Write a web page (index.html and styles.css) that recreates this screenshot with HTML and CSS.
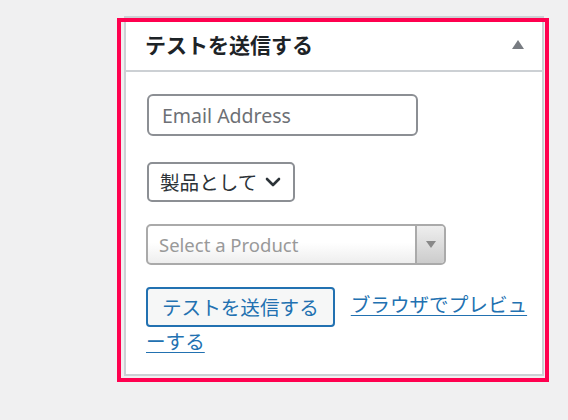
FILE: index.html
```html
<!DOCTYPE html>
<html lang="ja">
<head>
<meta charset="utf-8">
<link rel="stylesheet" href="styles.css">
</head>
<body>
<div class="page">
  <div class="postbox">
    <div class="postbox-header">
      <h2 class="postbox-title">テストを送信する</h2>
      <span class="toggle-arrow"></span>
    </div>
    <div class="postbox-body">
      <input class="email-input" type="text" placeholder="Email Address">
      <div class="as-select">
        <span class="as-select-label">製品として</span>
        <svg class="chevron" width="18" height="12" viewBox="0 0 18 12"><path d="M3 3 L9 9 L15 3" fill="none" stroke="#2c3338" stroke-width="2.6" stroke-linecap="round" stroke-linejoin="round"/></svg>
      </div>
      <div class="product-select">
        <span class="product-placeholder">Select a Product</span>
        <span class="product-arrow"><span class="product-arrow-tri"></span></span>
      </div>
      <div class="actions"><span class="send-button">テストを送信する</span><a class="preview-link" href="#">ブラウザでプレビューする</a></div>
    </div>
    <div class="highlight"></div>
  </div>
</div>
</body>
</html>
```
FILE: styles.css
```css
html, body {
  margin: 0;
  padding: 0;
  background: #f0f0f1;
}
body {
  width: 568px;
  height: 420px;
  overflow: hidden;
  font-family: "Noto Sans", "Noto Sans CJK JP", sans-serif;
  color: #1d2327;
}
.page {
  padding: 16px 0 0 124px;
}
.postbox {
  position: relative;
  box-sizing: border-box;
  width: 420px;
  height: 360px;
  background: #fff;
  border: 2px solid #ccd0d4;
}
.postbox-header {
  display: flex;
  align-items: center;
  justify-content: space-between;
  height: 52px;
  padding: 0 18px 0 19px;
  border-bottom: 2px solid #ccd0d4;
}
.postbox-title {
  margin: 0;
  font-family: "Noto Sans CJK JP", sans-serif;
  font-size: 21px;
  font-weight: 700;
  color: #1d2327;
  line-height: 1;
}
.toggle-arrow {
  width: 0;
  height: 0;
  border-left: 6px solid transparent;
  border-right: 6px solid transparent;
  border-bottom: 9px solid #787c82;
}
.postbox-body {
  padding: 22px 12px 20px 20px;
  display: flex;
  flex-direction: column;
  align-items: flex-start;
}
.email-input {
  box-sizing: border-box;
  width: 271px;
  height: 42px;
  margin: 0 0 0 1px;
  padding: 0 13px;
  border: 2px solid #8c8f94;
  border-radius: 6px;
  background: #fff;
  font-family: "Noto Sans", sans-serif;
  font-size: 19.5px;
  outline: none;
}
.email-input::placeholder {
  color: #6d7075;
}
.as-select {
  box-sizing: border-box;
  display: flex;
  align-items: center;
  gap: 7px;
  height: 40px;
  margin: 26px 0 0 1px;
  padding: 0 11px 0 11px;
  border: 2px solid #8c8f94;
  border-radius: 5px;
  background: #fff;
}
.as-select-label {
  font-family: "Noto Sans CJK JP", sans-serif;
  font-size: 19.6px;
  color: #2c3338;
  line-height: 1;
}
.chevron {
  display: block;
}
.product-select {
  box-sizing: border-box;
  display: flex;
  align-items: stretch;
  width: 300px;
  height: 41px;
  margin-top: 22px;
  border: 2px solid #aaa;
  border-radius: 5px;
  background: linear-gradient(to bottom, #fff 0%, #fff 45%, #eee 100%);
  overflow: hidden;
}
.product-placeholder {
  flex: 1;
  display: flex;
  align-items: center;
  padding-left: 11px;
  font-family: "Noto Sans", sans-serif;
  font-size: 18.5px;
  color: #999;
}
.product-arrow {
  width: 27px;
  display: flex;
  align-items: center;
  justify-content: center;
  border-left: 2px solid #aaa;
  background: linear-gradient(to bottom, #eee 0%, #ccc 100%);
}
.product-arrow-tri {
  width: 0;
  height: 0;
  border-left: 5px solid transparent;
  border-right: 5px solid transparent;
  border-top: 7px solid #888;
}
.actions {
  margin-top: 22px;
  font-family: "Noto Sans CJK JP", sans-serif;
  font-size: 19.6px;
  line-height: 28px;
}
.send-button {
  display: inline-block;
  box-sizing: border-box;
  height: 40px;
  padding: 0 14px;
  border: 2px solid #2271b1;
  border-radius: 4px;
  background: #f6f7f7;
  color: #2271b1;
  line-height: 35px;
  vertical-align: middle;
}
.preview-link {
  margin-left: 16px;
  color: #2271b1;
  text-decoration: underline;
  text-underline-offset: 3px;
}
.highlight {
  position: absolute;
  left: -9px;
  top: 0;
  right: -7px;
  bottom: -8px;
  border: 4px solid #ff004f;
  pointer-events: none;
}
```
